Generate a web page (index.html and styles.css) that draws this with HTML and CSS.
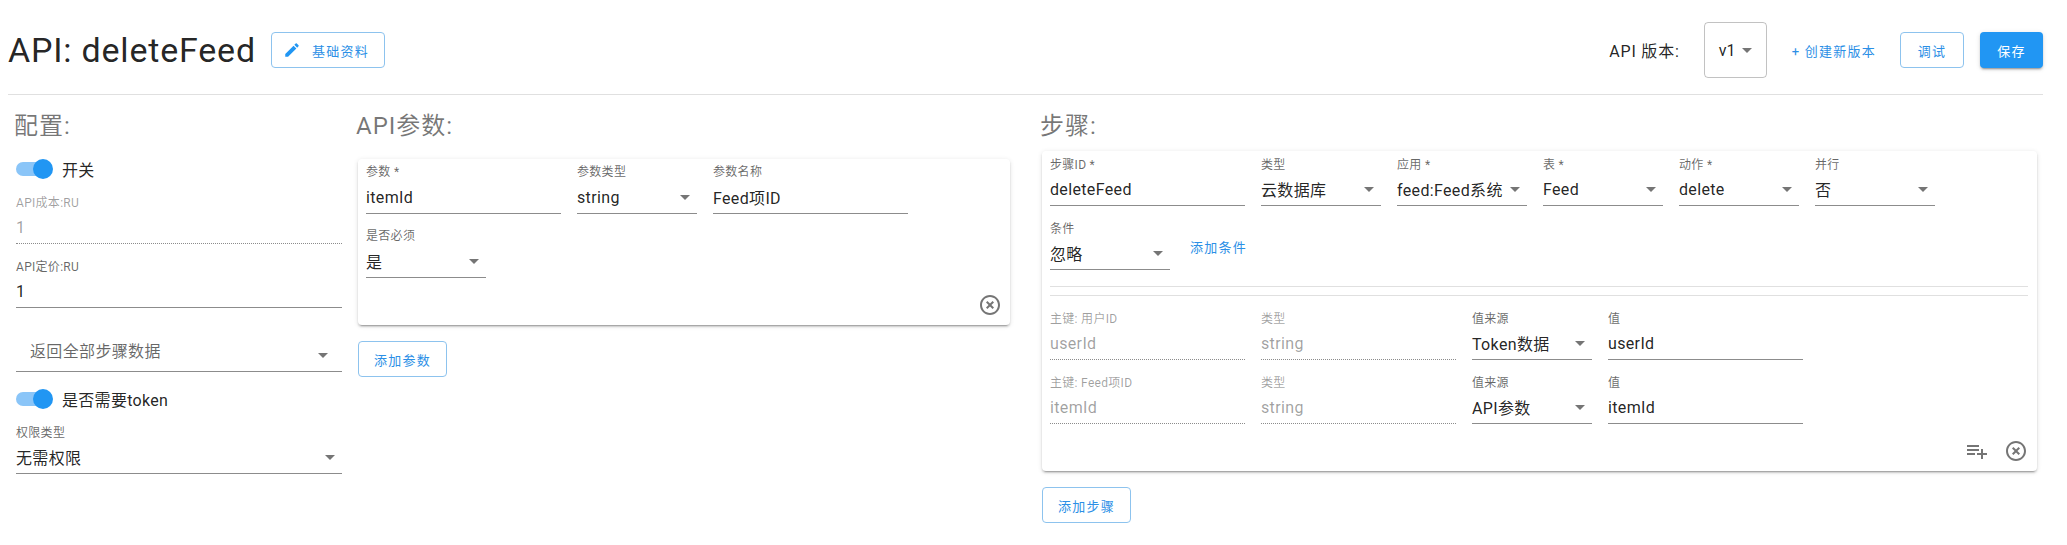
FILE: index.html
```html
<!doctype html>
<html lang="zh">
	<head>
		<meta charset="utf-8" />
		<title>API: deleteFeed</title>
		<link rel="stylesheet" href="styles.css">
	</head>

	<body>
		<div class="page">
			<header>
				<h1>API: deleteFeed</h1>
				<a class="btn outlined edit-button">
					<svg class="pencil" viewBox="0 0 24 24"><path d="M20.71,7.04C21.1,6.65 21.1,6 20.71,5.63L18.37,3.29C18,2.9 17.35,2.9 16.96,3.29L15.12,5.12L18.87,8.87M3,17.25V21H6.75L17.81,9.93L14.06,6.18L3,17.25Z" /></svg>
					<span>基础资料</span>
				</a>

				<span class="version-label">API 版本:</span>
				<span class="version-box">v1<i class="arrow"></i></span>
				<a class="text-link new-version">+ 创建新版本</a>
				<a class="btn outlined">调试</a>
				<a class="btn primary">保存</a>
			</header>

			<main>
				<section class="config-col"> <!-- 配置 -->
					<h2>配置:</h2>
					<div class="switch first-switch"><span class="track"><i></i></span>开关</div>

					<div class="field disabled">
						<label>API成本:RU</label>
						<div class="value">1</div>
					</div>
					<div class="field">
						<label>API定价:RU</label>
						<div class="value">1</div>
					</div>
					<div class="field no-label">
						<div class="value select muted">返回全部步骤数据<i class="arrow"></i></div>
					</div>

					<div class="switch"><span class="track"><i></i></span>是否需要token</div>

					<div class="field auth-field">
						<label>权限类型</label>
						<div class="value select">无需权限<i class="arrow"></i></div>
					</div>
				</section>

				<section class="params-col"> <!-- API参数 -->
					<h2>API参数:</h2>
					<div class="card params-card">
						<div class="row">
							<div class="field w-195">
								<label>参数 *</label>
								<div class="value">itemId</div>
							</div>
							<div class="field w-120">
								<label>参数类型</label>
								<div class="value select">string<i class="arrow"></i></div>
							</div>
							<div class="field w-195">
								<label>参数名称</label>
								<div class="value">Feed项ID</div>
							</div>
						</div>
						<div class="row">
							<div class="field w-120">
								<label>是否必须</label>
								<div class="value select">是<i class="arrow"></i></div>
							</div>
						</div>
						<div class="card-actions">
							<svg class="icon" viewBox="0 0 24 24"><path d="M12,20C7.59,20 4,16.41 4,12C4,7.59 7.59,4 12,4C16.41,4 20,7.59 20,12C20,16.41 16.41,20 12,20M12,2C6.47,2 2,6.47 2,12C2,17.53 6.47,22 12,22C17.53,22 22,17.53 22,12C22,6.47 17.53,2 12,2M14.59,8L12,10.59L9.41,8L8,9.41L10.59,12L8,14.59L9.41,16L12,13.41L14.59,16L16,14.59L13.41,12L16,9.41L14.59,8Z" /></svg>
						</div>
					</div>
					<a class="btn outlined add-button">添加参数</a>
				</section>

				<section class="steps-col"> <!-- 步骤 -->
					<h2>步骤:</h2>
					<div class="card steps-card">
						<div class="row">
							<div class="field w-195">
								<label>步骤ID *</label>
								<div class="value">deleteFeed</div>
							</div>
							<div class="field w-120">
								<label>类型</label>
								<div class="value select">云数据库<i class="arrow"></i></div>
							</div>
							<div class="field w-130">
								<label>应用 *</label>
								<div class="value select">feed:Feed系统<i class="arrow"></i></div>
							</div>
							<div class="field w-120">
								<label>表 *</label>
								<div class="value select">Feed<i class="arrow"></i></div>
							</div>
							<div class="field w-120">
								<label>动作 *</label>
								<div class="value select">delete<i class="arrow"></i></div>
							</div>
							<div class="field w-120">
								<label>并行</label>
								<div class="value select">否<i class="arrow"></i></div>
							</div>
						</div>
						<div class="row">
							<div class="field w-120">
								<label>条件</label>
								<div class="value select">忽略<i class="arrow"></i></div>
							</div>
							<a class="text-link add-condition">添加条件</a>
						</div>

						<hr class="first-line" />
						<hr />

						<div class="row">
							<div class="field w-195 disabled">
								<label>主键: 用户ID</label>
								<div class="value">userId</div>
							</div>
							<div class="field w-195 disabled">
								<label>类型</label>
								<div class="value">string</div>
							</div>
							<div class="field w-120">
								<label>值来源</label>
								<div class="value select">Token数据<i class="arrow"></i></div>
							</div>
							<div class="field w-195">
								<label>值</label>
								<div class="value">userId</div>
							</div>
						</div>
						<div class="row">
							<div class="field w-195 disabled">
								<label>主键: Feed项ID</label>
								<div class="value">itemId</div>
							</div>
							<div class="field w-195 disabled">
								<label>类型</label>
								<div class="value">string</div>
							</div>
							<div class="field w-120">
								<label>值来源</label>
								<div class="value select">API参数<i class="arrow"></i></div>
							</div>
							<div class="field w-195">
								<label>值</label>
								<div class="value">itemId</div>
							</div>
						</div>

						<div class="card-actions">
							<svg class="icon" viewBox="0 0 24 24"><path d="M2,16H10V14H2M18,14V10H16V14H12V16H16V20H18V16H22V14M14,6H2V8H14M14,10H2V12H14V10Z" /></svg>
							<svg class="icon" viewBox="0 0 24 24"><path d="M12,20C7.59,20 4,16.41 4,12C4,7.59 7.59,4 12,4C16.41,4 20,7.59 20,12C20,16.41 16.41,20 12,20M12,2C6.47,2 2,6.47 2,12C2,17.53 6.47,22 12,22C17.53,22 22,17.53 22,12C22,6.47 17.53,2 12,2M14.59,8L12,10.59L9.41,8L8,9.41L10.59,12L8,14.59L9.41,16L12,13.41L14.59,16L16,14.59L13.41,12L16,9.41L14.59,8Z" /></svg>
						</div>
					</div>
					<a class="btn outlined add-button">添加步骤</a>
				</section>
			</main>
		</div>
	</body>
</html>
```

FILE: styles.css
```css
/* 全局设置 */

body {
	margin: 0;
	font-size: 16px;
	font-family: Roboto, "Noto Sans CJK SC", sans-serif;
	color: rgba(0, 0, 0, 0.87);
	background: white;
}

.page {
	padding: 0 24px 0 8px;
}

/* 按钮 */

.btn {
	display: inline-flex;
	align-items: center;
	justify-content: center;
	box-sizing: border-box;
	height: 36px;
	min-width: 64px;
	padding: 0 15px;
	border-radius: 4px;
	font-size: 13px;
	letter-spacing: 1.25px;
	cursor: pointer;
}

.btn.outlined {
	border: 1px solid #8dc3ee;
	color: #2b8fe6;
}

.btn.primary {
	min-width: 63px;
	margin-left: 16px;
	background: #2196f3;
	color: white;
	box-shadow: 0 3px 1px -2px rgba(0, 0, 0, 0.2), 0 2px 2px 0 rgba(0, 0, 0, 0.14), 0 1px 5px 0 rgba(0, 0, 0, 0.12);
}

.text-link {
	font-size: 13px;
	letter-spacing: 1.25px;
	color: #2b8fe6;
	cursor: pointer;
}

/* 下拉箭头 */

.arrow {
	display: inline-block;
	width: 0;
	height: 0;
	border-top: 5px solid rgba(0, 0, 0, 0.54);
	border-left: 5px solid transparent;
	border-right: 5px solid transparent;
}

/* 顶栏 */

header {
	display: flex;
	align-items: center;
	box-sizing: border-box;
	height: 95px;
	padding-top: 6px;
	border-bottom: 1px solid #e0e0e0;
}

h1 {
	margin: 0;
	font-size: 34px;
	font-weight: 400;
	letter-spacing: 0.8px;
}

.edit-button {
	margin-left: 15px;
	padding: 0 15px 0 11px;
}

.pencil {
	width: 18px;
	height: 18px;
	margin-right: 11px;
	fill: #2196f3;
}

.version-label {
	margin-left: auto;
	margin-right: 24px;
	letter-spacing: 0.8px;
}

.version-box {
	display: inline-flex;
	align-items: center;
	justify-content: space-between;
	box-sizing: border-box;
	width: 63px;
	height: 56px;
	padding: 0 14px;
	border: 1px solid rgba(0, 0, 0, 0.24);
	border-radius: 4px;
}

.new-version {
	margin: 0 24px 0 25px;
}

/* 三栏 */

main {
	display: grid;
	grid-template-columns: 342px 684px 1fr;
}

main section {
	padding-left: 8px;
}

.config-col {
	padding-right: 8px;
}

h2 {
	margin: 15px 0 1px -2px;
	font-size: 24px;
	line-height: 32px;
	font-weight: 400;
	letter-spacing: 1px;
	color: rgba(0, 0, 0, 0.54);
}

/* 开关 */

.switch {
	display: flex;
	align-items: center;
	height: 20px;
	margin-top: 17px;
	letter-spacing: 0.3px;
}

.track {
	position: relative;
	display: inline-block;
	width: 35px;
	height: 14px;
	margin-right: 11px;
	border-radius: 7px;
	background: #8ac5f8;
}

.track i {
	position: absolute; /* 圆点压在轨道上 */
	top: -3px;
	right: -2px;
	width: 20px;
	height: 20px;
	border-radius: 50%;
	background: #2196f3;
}

/* 表单项 */

.field {
	display: flex;
	flex-direction: column;
	margin-top: 15px;
}

.field label {
	height: 16px;
	font-size: 12px;
	line-height: 16px;
	letter-spacing: 0.3px;
	color: rgba(0, 0, 0, 0.6);
}

.value {
	display: flex;
	align-items: center;
	height: 32px;
	border-bottom: 1px solid rgba(0, 0, 0, 0.45);
	letter-spacing: 0.35px;
	white-space: nowrap;
}

.value.select {
	justify-content: space-between;
	padding-right: 7px;
}

.field.disabled label,
.field.disabled .value {
	color: rgba(0, 0, 0, 0.38);
}

.field.disabled .value {
	border-bottom: 1px dotted rgba(0, 0, 0, 0.45);
}

.first-switch + .field {
	margin-top: 16px;
}

.no-label {
	margin-top: 31px;
}

.value.muted {
	align-items: flex-start;
	padding-left: 14px;
	padding-right: 14px;
	line-height: 26px;
	color: rgba(0, 0, 0, 0.6);
}

.muted .arrow {
	align-self: center;
}

.auth-field {
	margin-top: 16px;
}

.w-120 { width: 120px; }
.w-130 { width: 130px; }
.w-195 { width: 195px; }

/* 卡片 */

.card {
	box-sizing: border-box;
	border-radius: 4px;
	box-shadow: 0 3px 1px -2px rgba(0, 0, 0, 0.2), 0 2px 2px 0 rgba(0, 0, 0, 0.14), 0 1px 5px 0 rgba(0, 0, 0, 0.12);
	padding: 6px 8px 8px;
}

.row {
	display: flex;
	gap: 16px;
}

.row + .row {
	margin-top: 15px;
}

.row .field {
	margin-top: 0;
}

.params-card {
	width: 652px;
	margin-top: 17px;
}

.params-card .field label {
	line-height: 14px;
}

.steps-card {
	width: 995px;
	margin-top: 9px;
	padding-right: 9px;
}

.card-actions {
	display: flex;
	justify-content: flex-end;
	gap: 15px;
	margin-top: 15px;
}

.icon {
	width: 24px;
	height: 24px;
	fill: rgba(0, 0, 0, 0.54);
}

.add-button {
	margin-top: 16px;
}

.add-condition {
	align-self: center;
	margin: 2px 0 0 4px;
}

hr {
	margin: 8px 0 0;
	border: 0;
	border-top: 1px solid #e0e0e0;
}

hr.first-line {
	margin-top: 16px;
}

hr + .row {
	margin-top: 15px;
}
```
